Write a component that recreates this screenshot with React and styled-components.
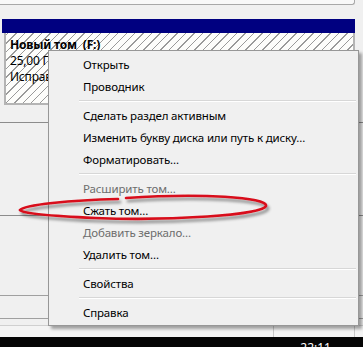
import React from "react";
import styled, { createGlobalStyle } from "styled-components";

const GlobalStyle = createGlobalStyle`
  html, body { margin: 0; padding: 0; }
  body {
    font-family: "Noto Sans", "Open Sans", sans-serif;
    font-size: 12px;
    background: #f0f0f0;
  }
`;

const Screen = styled.div`
  position: relative;
  width: 363px;
  height: 347px;
  overflow: hidden;
  background: #f0f0f0;
  display: flex;
  flex-direction: column;
`;

const TopStrip = styled.div`
  height: 4px;
  margin-right: 8px;
  background: #f8f8f8;
  border-bottom: 1px solid #a8a8a8;
  border-right: 1px solid #a8a8a8;
  border-bottom-right-radius: 3px;
`;

const DiskArea = styled.div`
  padding: 14px 8px 0 2px;
`;

const VolumeHeader = styled.div`
  height: 14px;
  background: #000080;
`;

const VolumeBox = styled.div`
  height: 66px;
  margin-left: 2px;
  border: 2px solid #b4b4b4;
  border-top: none;
  background-color: #fdfdfb;
  background-image: repeating-linear-gradient(
    -45deg,
    transparent 0,
    transparent 5px,
    #9a9a9a 5px,
    #9a9a9a 6px
  );
  padding: 4px 0 0 4px;
  display: flex;
  flex-direction: column;
`;

const VolumeLine = styled.div`
  font-size: 12px;
  line-height: 16px;
  letter-spacing: -0.2px;
  color: #000;
  font-weight: ${p => (p.$bold ? 700 : 400)};
  white-space: nowrap;
`;

const LowerPane = styled.div`
  flex: 1;
  display: flex;
  flex-direction: column;
`;

const PaneRow = styled.div`
  height: ${p => p.$h}px;
  border-bottom: 1px solid ${p => p.$c || "#a0a0a0"};
`;

const StatusBar = styled.div`
  height: 11px;
  background: #f4f4f4;
  border-top: 1px solid #d0d0d0;
  display: flex;
  justify-content: flex-end;
`;

const StatusCell = styled.div`
  width: ${p => p.$w}px;
  border-left: 1px solid #c8c8c8;
`;

const Taskbar = styled.div`
  height: 10px;
  background: #050505;
  display: flex;
  justify-content: flex-end;
  padding-right: 32px;
  overflow: hidden;
`;

const Clock = styled.span`
  color: #fff;
  font-size: 12px;
  line-height: 12px;
  margin-top: 5px;
`;

const Menu = styled.div`
  position: absolute;
  left: 48px;
  top: 50px;
  width: 305px;
  padding: 2px;
  background: #f0f0f0;
  border: 1px solid #979797;
  box-shadow: 3px 3px 3px rgba(0, 0, 0, 0.35);
  display: flex;
  flex-direction: column;
`;

const Item = styled.div`
  height: 22px;
  display: flex;
  align-items: center;
  padding-left: 32px;
  color: ${p => (p.$disabled ? "#6d6d6d" : "#000")};
  white-space: nowrap;
  font-size: 11.5px;
  letter-spacing: -0.15px;
`;

const Separator = styled.div`
  height: 7px;
  display: flex;
  align-items: center;
  padding-left: 28px;
  &::after {
    content: "";
    flex: 1;
    height: 1px;
    background: #d7d7d7;
    border-bottom: 1px solid #fff;
  }
`;

const Marker = styled.svg`
  position: absolute;
  left: 0;
  top: 0;
  pointer-events: none;
`;

const items = [
  { t: "Открыть" },
  { t: "Проводник" },
  { sep: true },
  { t: "Сделать раздел активным" },
  { t: "Изменить букву диска или путь к диску..." },
  { t: "Форматировать..." },
  { sep: true },
  { t: "Расширить том...", d: true },
  { t: "Сжать том..." },
  { t: "Добавить зеркало...", d: true },
  { t: "Удалить том..." },
  { sep: true },
  { t: "Свойства" },
  { sep: true },
  { t: "Справка" },
];

export default function App() {
  return (
    <>
      <GlobalStyle />
      <Screen>
        <TopStrip />
        <DiskArea>
          <VolumeHeader />
          <VolumeBox>
            <VolumeLine $bold>Новый том&nbsp; (F:)</VolumeLine>
            <VolumeLine>25,00 ГБ NTFS</VolumeLine>
            <VolumeLine>Исправен (Логический диск)</VolumeLine>
          </VolumeBox>
        </DiskArea>
        <LowerPane>
          <PaneRow $h={17} $c="#8c8c8c" />
          <PaneRow $h={92} $c="#8c8c8c" />
          <PaneRow $h={79} $c="#a0a0a0" />
          <PaneRow $h={22} $c="#a0a0a0" />
        </LowerPane>
        <StatusBar>
          <StatusCell $w={80} />
          <StatusCell $w={8} />
        </StatusBar>
        <Taskbar>
          <Clock>22:11</Clock>
        </Taskbar>

        <Menu>
          {items.map((it, i) =>
            it.sep ? (
              <Separator key={i} />
            ) : (
              <Item key={i} $disabled={it.d}>
                {it.t}
              </Item>
            )
          )}
        </Menu>

        <Marker width="363" height="347" viewBox="0 0 363 347">
          <defs>
            <filter id="sh" x="-10%" y="-50%" width="120%" height="200%">
              <feDropShadow dx="2" dy="3" stdDeviation="1.5" floodColor="#000" floodOpacity="0.45" />
            </filter>
          </defs>
          <path
            d="M 126 198 C 200 193, 268 197, 266 206 C 263 215, 170 221, 95 218 C 50 216, 22 213, 20 210 C 24 205, 70 200, 118 199"
            fill="none"
            stroke="#d8101a"
            strokeWidth="2.6"
            strokeLinecap="round"
            filter="url(#sh)"
          />
        </Marker>
      </Screen>
    </>
  );
}
